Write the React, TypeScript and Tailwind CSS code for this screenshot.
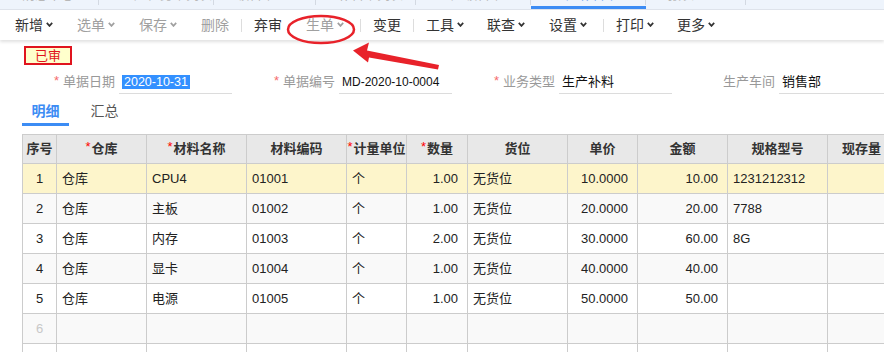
import React from "react";

type TItem = { kind: "item"; t: string; chev: boolean; dis: boolean; ml: string } | { kind: "sep"; ml: string };

const toolbar: TItem[] = [
  { kind: "item", t: "新增", chev: true, dis: false, ml: "ml-[15px]" },
  { kind: "item", t: "选单", chev: true, dis: true, ml: "ml-[24px]" },
  { kind: "item", t: "保存", chev: true, dis: true, ml: "ml-[24px]" },
  { kind: "item", t: "删除", chev: false, dis: true, ml: "ml-[24px]" },
  { kind: "sep", ml: "ml-[12px]" },
  { kind: "item", t: "弃审", chev: false, dis: false, ml: "ml-[12px]" },
  { kind: "item", t: "生单", chev: true, dis: true, ml: "ml-[24px]" },
  { kind: "sep", ml: "ml-[16px]" },
  { kind: "item", t: "变更", chev: false, dis: false, ml: "ml-[12px]" },
  { kind: "sep", ml: "ml-[12px]" },
  { kind: "item", t: "工具", chev: true, dis: false, ml: "ml-[12px]" },
  { kind: "item", t: "联查", chev: true, dis: false, ml: "ml-[23px]" },
  { kind: "item", t: "设置", chev: true, dis: false, ml: "ml-[24px]" },
  { kind: "sep", ml: "ml-[16px]" },
  { kind: "item", t: "打印", chev: true, dis: false, ml: "ml-[12px]" },
  { kind: "item", t: "更多", chev: true, dis: false, ml: "ml-[23px]" },
];

type Col = { w: string; label: string; star: boolean; align: "c" | "l" | "r" };
const cols: Col[] = [
  { w: "w-[34px]", label: "序号", star: false, align: "c" },
  { w: "w-[90px]", label: "仓库", star: true, align: "l" },
  { w: "w-[100px]", label: "材料名称", star: true, align: "l" },
  { w: "w-[100px]", label: "材料编码", star: false, align: "l" },
  { w: "w-[60px]", label: "计量单位", star: true, align: "l" },
  { w: "w-[61px]", label: "数量", star: true, align: "r" },
  { w: "w-[100px]", label: "货位", star: false, align: "l" },
  { w: "w-[70px]", label: "单价", star: false, align: "r" },
  { w: "w-[90px]", label: "金额", star: false, align: "r" },
  { w: "w-[100px]", label: "规格型号", star: false, align: "l" },
  { w: "w-[68px]", label: "现存量", star: false, align: "r" },
];

const rows: string[][] = [
  ["1", "仓库", "CPU4", "01001", "个", "1.00", "无货位", "10.0000", "10.00", "1231212312", ""],
  ["2", "仓库", "主板", "01002", "个", "1.00", "无货位", "20.0000", "20.00", "7788", ""],
  ["3", "仓库", "内存", "01003", "个", "2.00", "无货位", "30.0000", "60.00", "8G", ""],
  ["4", "仓库", "显卡", "01004", "个", "1.00", "无货位", "40.0000", "40.00", "", ""],
  ["5", "仓库", "电源", "01005", "个", "1.00", "无货位", "50.0000", "50.00", "", ""],
  ["6", "", "", "", "", "", "", "", "", "", ""],
  ["", "", "", "", "", "", "", "", "", "", ""],
];

const rowBg = ["bg-[#fdf5cb]", "bg-[#f9f9f9]", "bg-white", "bg-[#f9f9f9]", "bg-white", "bg-[#f9f9f9]", "bg-white"];

function Chevron({ color }: { color: string }) {
  return (
    <svg width="7" height="5" viewBox="0 0 7 5" className="ml-[3px] mt-[-1px]">
      <path d="M0.8 0.9 L3.5 3.9 L6.2 0.9" fill="none" stroke={color} strokeWidth="1.7" />
    </svg>
  );
}

const topTabs = [
  { w: "w-[99px]", t: "消息中心", active: false },
  { w: "w-[115px]", t: "生产任务单列表", active: false },
  { w: "w-[102px]", t: "领料单", active: false },
  { w: "w-[100px]", t: "补料单列表", active: false },
  { w: "w-[115px]", t: "生产领料单", active: false },
  { w: "w-[115px]", t: "生产补料单", active: true },
  { w: "w-[100px]", t: "报表", active: false },
];

function Field({ label, star, value, valueClass, selected }: { label: string; star: boolean; value: string; valueClass: string; selected?: boolean }) {
  return (
    <div className="flex items-center w-[220px] shrink-0">
      <div className="w-[65px] flex justify-end items-center text-[13px] text-[#999] whitespace-nowrap pr-px">
        {star && <span className="text-[#f56c6c] mr-[4px] relative top-[-1px]">*</span>}
        {label}
      </div>
      <div className="ml-[3px] w-[113px] h-[24px] border-b border-[#dcdcdc] flex items-center pl-[3px] shrink-0">
        {selected ? (
          <span className={`bg-[#3390ff] text-white px-[2px] leading-[14px] ${valueClass}`}>{value}</span>
        ) : (
          <span className={`text-[#111] ${valueClass}`}>{value}</span>
        )}
      </div>
    </div>
  );
}

export default function App() {
  return (
    <div className="relative w-[884px] h-[352px] overflow-hidden bg-white font-['Liberation_Sans','Noto_Sans_CJK_SC',sans-serif]">
      {/* top tab strip */}
      <div className="h-[10px] bg-[#eef4fc] border-b border-[#dfe4ec] flex overflow-hidden">
        {topTabs.map((tb, i) => (
          <div key={i} className={`relative h-full shrink-0 ${tb.w}`}>
            <span className={`absolute left-[22px] top-[-12px] text-[13px] leading-[13px] whitespace-nowrap ${tb.active ? "text-[#7aa9f0]" : "text-[#b8b8b8]"}`}>{tb.t}</span>
            <span className="absolute right-0 top-0 h-[5px] w-px bg-[#d3d9e2]" />
            {tb.active && <span className="absolute left-0 right-0 bottom-0 h-[3px] bg-[#3c8cf4]" />}
          </div>
        ))}
      </div>

      {/* toolbar */}
      <div className="relative z-10 h-[30px] bg-white flex items-center text-[14px] shadow-[0_2px_3px_rgba(0,0,0,0.12)]">
        {toolbar.map((it, i) =>
          it.kind === "sep" ? (
            <div key={i} className={`w-px h-[13px] bg-[#dddddd] ${it.ml}`} />
          ) : (
            <div key={i} className={`flex items-center whitespace-nowrap ${it.ml} ${it.dis ? "text-[#a0a0a0]" : "text-[#333]"}`}>
              <span>{it.t}</span>
              {it.chev && <Chevron color={it.dis ? "#a0a0a0" : "#333"} />}
            </div>
          )
        )}
      </div>

      {/* status badge */}
      <div className="ml-[24px] mt-[6px] w-[48px] h-[19px] border-2 border-[#e0141e] bg-[#ffffcc] flex items-center justify-center text-[13px] text-[#e0141e] leading-none">
        已审
      </div>

      {/* form row */}
      <div className="flex mt-[5px] ml-[51px]">
        <Field label="单据日期" star value="2020-10-31" valueClass="text-[12.5px]" selected />
        <Field label="单据编号" star value="MD-2020-10-0004" valueClass="text-[12px]" />
        <Field label="业务类型" star value="生产补料" valueClass="text-[13px]" />
        <Field label="生产车间" star={false} value="销售部" valueClass="text-[13px]" />
      </div>

      {/* tabs */}
      <div className="flex mt-[6px] ml-[22px]">
        <div className="w-[47px] h-[26px] border-b-[3px] border-[#3c8cf4] flex items-center justify-center text-[14px] font-bold text-[#3c8cf4]">
          明细
        </div>
        <div className="ml-[12px] w-[47px] h-[26px] flex items-center justify-center text-[14px] text-[#555] pb-[3px]">
          汇总
        </div>
      </div>

      {/* table */}
      <div className="mt-[8px] ml-[22px] border-t border-l border-[#cccccc] w-max">
        <div className="flex h-[29px] bg-[#e8e8e8] border-b border-[#cccccc]">
          {cols.map((c, i) => (
            <div key={i} className={`${c.w} shrink-0 border-r border-[#cccccc] flex items-center justify-center text-[13px] font-bold text-[#333] whitespace-nowrap overflow-hidden`}>
              {c.star && <span className="text-[#f00] font-normal relative top-[-2px] mr-px">*</span>}
              {c.label}
            </div>
          ))}
        </div>
        {rows.map((r, ri) => (
          <div key={ri} className={`flex h-[30px] border-b border-[#cccccc] ${rowBg[ri]}`}>
            {cols.map((c, ci) => (
              <div
                key={ci}
                className={`${c.w} shrink-0 border-r border-[#cccccc] flex items-center text-[13px] whitespace-nowrap overflow-hidden ${
                  c.align === "c" ? "justify-center" : c.align === "r" ? "justify-end pr-[9px]" : "justify-start pl-[5px]"
                } ${ri === 5 && ci === 0 ? "text-[#c8c8c8]" : "text-[#222]"}`}
              >
                {r[ci]}
              </div>
            ))}
          </div>
        ))}
      </div>

      {/* annotation overlay */}
      <svg className="absolute left-0 top-0 pointer-events-none z-20" width="884" height="352" viewBox="0 0 884 352">
        <ellipse cx="321" cy="29.5" rx="33" ry="13.5" fill="none" stroke="#e8222a" strokeWidth="2.5" />
        <polygon points="353,50.5 369,42.5 367,50.5 439,65 438,69.5 369,57.5 368,62.5" fill="#e8222a" />
      </svg>
    </div>
  );
}
